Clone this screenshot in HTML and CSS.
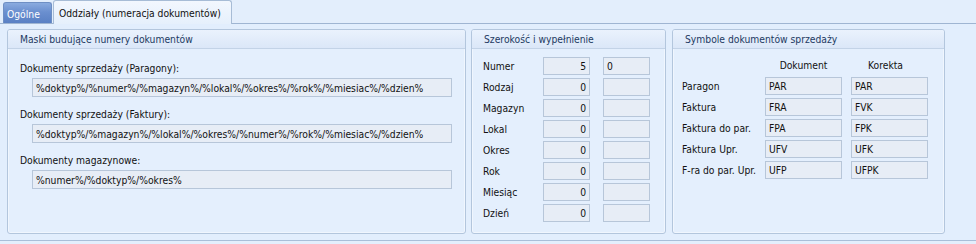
FILE: index.html
```html
<!DOCTYPE html>
<html lang="pl">
<head>
<meta charset="utf-8">
<title>Oddziały</title>
<link rel="stylesheet" href="styles.css">
</head>
<body>
<div class="window">
  <div class="tabs">
    <div class="tab tab-inactive">Ogólne</div>
    <div class="tab tab-active">Oddziały (numeracja dokumentów)</div>
  </div>
  <div class="panel">
    <section class="group group-masks">
      <header class="group-head">Maski budujące numery dokumentów</header>
      <div class="masks">
        <div class="mask">
          <div class="mask-label">Dokumenty sprzedaży (Paragony):</div>
          <div class="field mask-field">%doktyp%/%numer%/%magazyn%/%lokal%/%okres%/%rok%/%miesiac%/%dzien%</div>
        </div>
        <div class="mask">
          <div class="mask-label">Dokumenty sprzedaży (Faktury):</div>
          <div class="field mask-field">%doktyp%/%magazyn%/%lokal%/%okres%/%numer%/%rok%/%miesiac%/%dzien%</div>
        </div>
        <div class="mask">
          <div class="mask-label">Dokumenty magazynowe:</div>
          <div class="field mask-field">%numer%/%doktyp%/%okres%</div>
        </div>
      </div>
    </section>
    <section class="group group-width">
      <header class="group-head">Szerokość i wypełnienie</header>
      <div class="rows width-rows">
        <div class="row"><div class="row-label">Numer</div><div class="field num">5</div><div class="field fill">0</div></div>
        <div class="row"><div class="row-label">Rodzaj</div><div class="field num">0</div><div class="field fill"></div></div>
        <div class="row"><div class="row-label">Magazyn</div><div class="field num">0</div><div class="field fill"></div></div>
        <div class="row"><div class="row-label">Lokal</div><div class="field num">0</div><div class="field fill"></div></div>
        <div class="row"><div class="row-label">Okres</div><div class="field num">0</div><div class="field fill"></div></div>
        <div class="row"><div class="row-label">Rok</div><div class="field num">0</div><div class="field fill"></div></div>
        <div class="row"><div class="row-label">Miesiąc</div><div class="field num">0</div><div class="field fill"></div></div>
        <div class="row"><div class="row-label">Dzień</div><div class="field num">0</div><div class="field fill"></div></div>
      </div>
    </section>
    <section class="group group-symbols">
      <header class="group-head">Symbole dokumentów sprzedaży</header>
      <div class="rows symbol-rows">
        <div class="row row-head"><div class="sym-label"></div><div class="col-head">Dokument</div><div class="col-head col-head-kor">Korekta</div></div>
        <div class="row"><div class="sym-label">Paragon</div><div class="field sym">PAR</div><div class="field sym">PAR</div></div>
        <div class="row"><div class="sym-label">Faktura</div><div class="field sym">FRA</div><div class="field sym">FVK</div></div>
        <div class="row"><div class="sym-label">Faktura do par.</div><div class="field sym">FPA</div><div class="field sym">FPK</div></div>
        <div class="row"><div class="sym-label">Faktura Upr.</div><div class="field sym">UFV</div><div class="field sym">UFK</div></div>
        <div class="row"><div class="sym-label">F-ra do par. Upr.</div><div class="field sym">UFP</div><div class="field sym">UFPK</div></div>
      </div>
    </section>
  </div>
</div>
</body>
</html>
```
FILE: styles.css
```css
html, body {
  margin: 0;
  padding: 0;
}
body {
  width: 976px;
  height: 244px;
  overflow: hidden;
  background: #dde9f8;
  font-family: "DejaVu Sans Condensed", "DejaVu Sans", "Liberation Sans", sans-serif;
  font-stretch: semi-condensed;
  font-size: 10.25px;
  color: #111;
}
.window {
  width: 976px;
  height: 244px;
  background: #e3eefc;
}
.tabs {
  height: 23px;
  display: flex;
  align-items: flex-end;
  padding-left: 3px;
  gap: 1px;
}
.tab {
  box-sizing: border-box;
  white-space: nowrap;
  border-radius: 3px 3px 0 0;
}
.tab-inactive {
  width: 49px;
  height: 21px;
  line-height: 22px;
  padding-left: 3px;
  color: #fff;
  background: linear-gradient(#8aabdf, #6a8fcf 45%, #5a80c4);
  border: 1px solid #6e8fc4;
  border-bottom: none;
}
.tab-active {
  width: 179px;
  height: 24px;
  line-height: 24px;
  padding-left: 5px;
  background: linear-gradient(#f2f7fe, #e6f0fc);
  border: 1px solid #a7bcd6;
  border-bottom: none;
  margin-bottom: -1px;
  position: relative;
  z-index: 1;
}
.panel {
  box-sizing: border-box;
  height: 218px;
  border-top: 1px solid #9fb5d2;
  border-bottom: 1px solid #a9bed8;
  background: #e2eefd;
  padding: 5px 0 0 7px;
  display: flex;
  align-items: flex-start;
}
.group {
  box-sizing: border-box;
  flex: none;
  height: 205px;
  border: 1px solid #b3c6dd;
  border-radius: 3px;
  background: #e4effd;
  box-shadow: inset 0 0 0 1px rgba(255, 255, 255, 0.45);
}
.group-masks { width: 459px; }
.group-width { width: 195px; margin-left: 5px; }
.group-symbols { width: 273px; margin-left: 6px; }
.group-head {
  height: 18px;
  line-height: 19px;
  border-bottom: 1px solid #c3d3e7;
  background: linear-gradient(#eaf2fd, #dbe7f8);
  color: #1d3a62;
  padding-left: 12px;
  border-radius: 2px 2px 0 0;
  white-space: nowrap;
}
.field {
  box-sizing: border-box;
  flex: none;
  height: 18px;
  line-height: 17px;
  background: #e7edf6;
  border: 1px solid #b7c6d9;
  white-space: nowrap;
  overflow: hidden;
}
.masks {
  padding: 12px 0 0 12px;
  display: flex;
  flex-direction: column;
  gap: 10px;
}
.mask {
  display: flex;
  flex-direction: column;
  align-items: flex-start;
  gap: 3px;
}
.mask-label {
  height: 14px;
  line-height: 14px;
  white-space: nowrap;
}
.mask-field {
  margin-left: 12px;
  width: 420px;
  height: 19px;
  padding-left: 3px;
  line-height: 18px;
}
.rows {
  display: flex;
  flex-direction: column;
  gap: 3px;
}
.row {
  display: flex;
  height: 18px;
}
.width-rows {
  padding: 8px 0 0 11px;
}
.width-rows .row {
  gap: 13px;
}
.row-label {
  flex: none;
  width: 47px;
  line-height: 18px;
  white-space: nowrap;
}
.num {
  width: 47px;
  text-align: right;
  padding-right: 3px;
}
.fill {
  width: 47px;
  padding-left: 3px;
}
.symbol-rows {
  padding: 8px 0 0 9px;
}
.symbol-rows .row {
  gap: 9px;
}
.symbol-rows .row-head {
  height: 16px;
  margin-bottom: 1px;
}
.sym-label {
  flex: none;
  width: 74px;
  line-height: 18px;
  white-space: nowrap;
}
.col-head {
  flex: none;
  width: 77px;
  text-align: center;
  line-height: 16px;
}
.col-head-kor {
  padding-right: 8px;
  box-sizing: border-box;
}
.sym {
  width: 77px;
  padding-left: 3px;
}
```
